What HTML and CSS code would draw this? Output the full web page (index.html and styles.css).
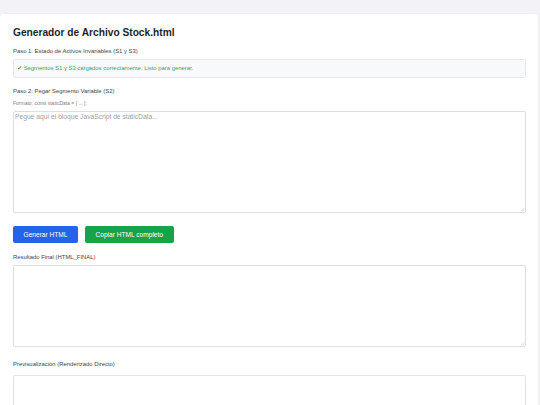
FILE: index.html
```html
<!DOCTYPE html>
<html lang="es">
<head>
<meta charset="utf-8">
<title>Generador de Archivo Stock.html</title>
<link rel="stylesheet" href="styles.css">
</head>
<body>
<div class="card">
  <h1 class="title">Generador de Archivo Stock.html</h1>

  <div class="label label-s1">Paso 1: Estado de Activos Invariables (S1 y S3)</div>
  <div class="status">✔ Segmentos S1 y S3 cargados correctamente. Listo para generar.</div>

  <div class="label label-s2">Paso 2: Pegar Segmento Variable (S2)</div>
  <div class="hint">Formato: const staticData = [ ... ];</div>
  <div class="field-wrap">
    <textarea class="field field-input" placeholder="Pegue aquí el bloque JavaScript de staticData..."></textarea>
    <svg class="grip" width="5" height="5" viewBox="0 0 5 5"><path d="M4.5 0.8 L0.8 4.5 M4.5 2.8 L2.8 4.5" stroke="#b8b8b8" stroke-width="0.6" fill="none"/></svg>
  </div>

  <div class="actions">
    <button class="btn btn-blue">Generar HTML</button>
    <button class="btn btn-green">Copiar HTML completo</button>
  </div>

  <div class="label label-s3">Resultado Final (HTML_FINAL)</div>
  <div class="field-wrap">
    <textarea class="field field-output"></textarea>
    <svg class="grip" width="5" height="5" viewBox="0 0 5 5"><path d="M4.5 0.8 L0.8 4.5 M4.5 2.8 L2.8 4.5" stroke="#b8b8b8" stroke-width="0.6" fill="none"/></svg>
  </div>

  <div class="label label-s4">Previsualización (Renderizado Directo)</div>
  <div class="preview"></div>
</div>
</body>
</html>
```

FILE: styles.css
```css
* {
  box-sizing: border-box;
}

html, body {
  margin: 0;
  padding: 0;
}

body {
  background: #f3f3f7;
  font-family: "Liberation Sans", Arial, sans-serif;
  color: #333;
  padding: 14px 2px 0 0;
  overflow: hidden;
  height: 405px;
}

.card {
  background: #ffffff;
  border-radius: 4px;
  padding: 13px 12px 13px 13px;
  box-shadow: 0 0 3px rgba(0, 0, 0, 0.04);
  min-height: 420px;
}

.title {
  margin: 0 0 9px 0;
  font-size: 10.2px;
  line-height: 12px;
  font-weight: bold;
  color: #1f1f1f;
}

.label {
  font-size: 5.9px;
  line-height: 7px;
  color: #444;
}

.label-s1 {
  margin-bottom: 4px;
}

.label-s2 {
  margin-top: 10px;
  margin-bottom: 5px;
}

.label-s3 {
  margin-bottom: 4.5px;
}

.label-s4 {
  margin-top: 14px;
  margin-bottom: 7.5px;
}

.status {
  border: 1px solid #e6e8eb;
  background: #f8f9fa;
  border-radius: 2px;
  color: #34a85a;
  font-size: 5.9px;
  line-height: 7px;
  padding: 5px 3px 5px 3px;
  height: 19px;
}

.hint {
  font-size: 5px;
  line-height: 6px;
  color: #808080;
  margin-bottom: 5px;
}

.field-wrap {
  position: relative;
}

.field {
  display: block;
  width: 100%;
  border: 1px solid #dedede;
  border-radius: 2px;
  font-family: "Liberation Sans", Arial, sans-serif;
  font-size: 6.7px;
  line-height: 8px;
  padding: 1px;
  margin: 0;
  resize: none;
  background: #fff;
}

.field::placeholder {
  color: #a0a0a0;
}

.grip {
  position: absolute;
  right: 1px;
  bottom: 1px;
}

.field-input {
  height: 101.5px;
}

.field-output {
  height: 81.5px;
}

.actions {
  display: flex;
  gap: 7px;
  margin: 13.5px 0 10.5px 0;
}

.btn {
  border: none;
  border-radius: 2px;
  color: #fff;
  font-family: "Liberation Sans", Arial, sans-serif;
  font-size: 6.6px;
  line-height: 8px;
  height: 17px;
  padding: 0 10.5px;
  cursor: pointer;
}

.btn-blue {
  background: #2563eb;
}

.btn-green {
  background: #16a34a;
}

.preview {
  border: 1px solid #e3e3e3;
  border-radius: 2px;
  height: 60px;
}
```
